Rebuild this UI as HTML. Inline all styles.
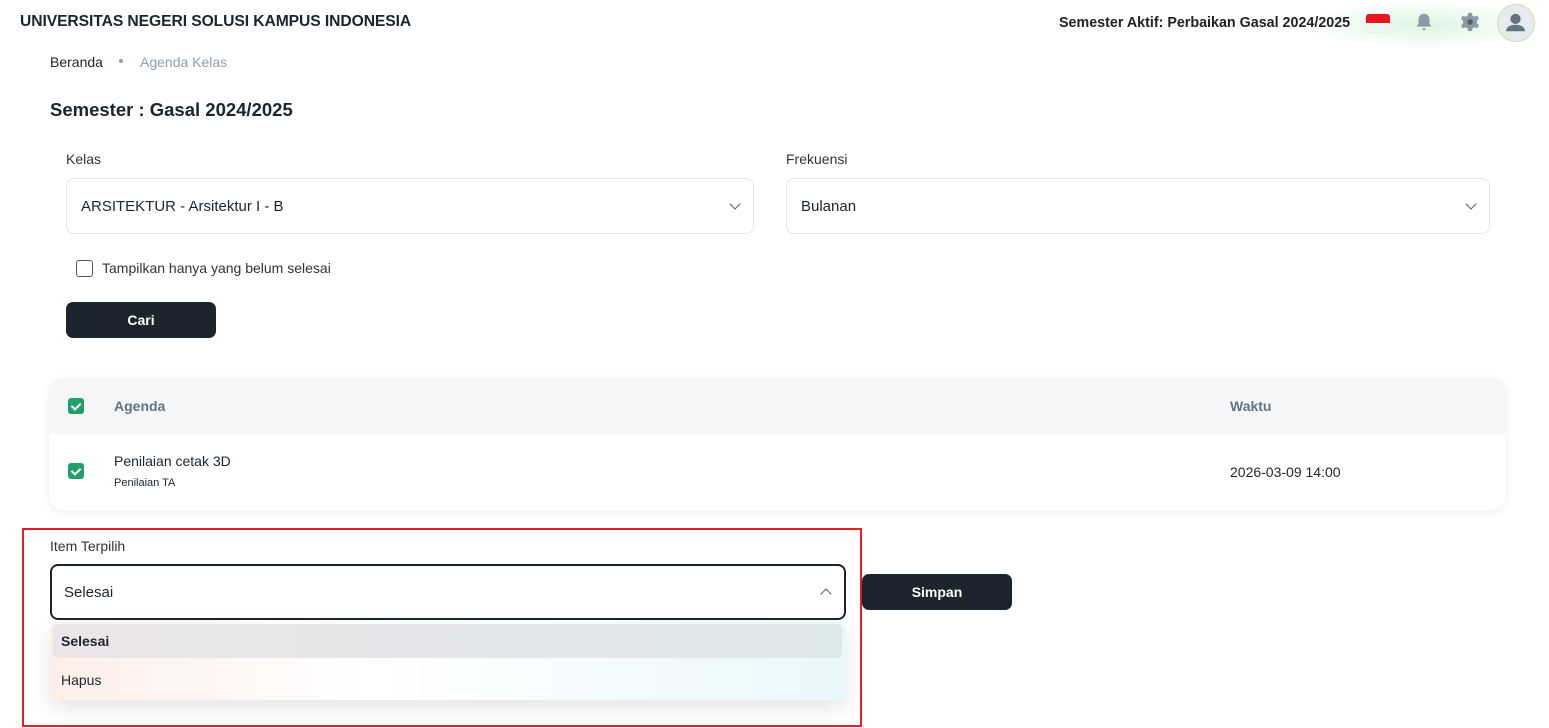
<!DOCTYPE html>
<html><head><meta charset="utf-8"><style>
*{box-sizing:border-box;margin:0;padding:0}
body{width:1549px;height:728px;overflow:hidden;background:#fff;font-family:"Liberation Sans",sans-serif;color:#1c252e;position:relative}
.abs{position:absolute}
.sel{position:absolute;border:1px solid #e3e6ea;border-radius:8px;height:56px;font-size:15px;padding:0 14px;display:flex;align-items:center;justify-content:space-between}
.chev{width:8px;height:8px;border-right:1.5px solid #555;border-bottom:1.5px solid #555;transform:rotate(45deg);margin-top:-4px}
.btn{position:absolute;background:#1c252e;color:#fff;font-weight:bold;font-size:14px;border-radius:7px;display:flex;align-items:center;justify-content:center}
.cb{position:absolute;width:16px;height:16px;border-radius:3px;background:#22a06b}
.cb:after{content:"";position:absolute;left:5px;top:3px;width:4px;height:7px;border-right:2px solid #fff;border-bottom:2px solid #fff;transform:rotate(45deg)}
</style></head><body>
<div class="abs" style="left:20px;top:13px;font-size:16px;font-weight:bold;letter-spacing:-0.1px;transform:scaleX(0.98);transform-origin:left">UNIVERSITAS NEGERI SOLUSI KAMPUS INDONESIA</div>
<div class="abs" style="left:1300px;top:0px;width:250px;height:50px;background:radial-gradient(ellipse at center,#dcf5e2 0%,rgba(255,255,255,0) 70%)"></div>
<div class="abs" style="left:1059px;top:15px;font-size:14.3px;font-weight:bold;color:#222">Semester Aktif: Perbaikan Gasal 2024/2025</div>
<div class="abs" style="left:1365px;top:13px;width:26px;height:20px;border-radius:4px;overflow:hidden;border:1px solid #eee"><div style="height:50%;background:#e8141f"></div></div>
<svg class="abs" style="left:1413px;top:11px" width="22" height="22" viewBox="0 0 24 24"><path fill="#8d9aa5" d="M12 3a6 6 0 0 0-6 6v5l-2 3h16l-2-3V9a6 6 0 0 0-6-6zM10 19a2 2 0 0 0 4 0z"/></svg>
<svg class="abs" style="left:1459px;top:11px" width="22" height="22" viewBox="0 0 24 24"><path fill="#8d9aa5" d="M10 2h4l.6 3 2.4 1.3 2.8-1.2 2 3.4-2.3 2 0 2.9 2.3 2-2 3.4-2.8-1.2L14.6 19 14 22h-4l-.6-3-2.4-1.3-2.8 1.2-2-3.4 2.3-2V10.6L2.2 8.5l2-3.4L7 6.3 9.4 5z"/><circle cx="12" cy="12" r="3" fill="#555f68"/></svg>
<div class="abs" style="left:1497px;top:4px;width:38px;height:38px;border-radius:50%;background:#e8eaee;border:1.5px solid #c9e2a8"><svg width="35" height="35" viewBox="0 0 24 24" style="margin:0"><circle cx="12" cy="9.5" r="3.5" fill="#637381"/><path fill="#637381" d="M5.5 18c0-3 3-4.5 6.5-4.5s6.5 1.5 6.5 4.5z"/></svg></div>
<div class="abs" style="left:50px;top:54px;font-size:14px;color:#1c252e">Beranda</div>
<div class="abs" style="left:119px;top:59px;width:4px;height:4px;border-radius:50%;background:#919eab"></div>
<div class="abs" style="left:140px;top:54px;font-size:14px;color:#919eab">Agenda Kelas</div>
<div class="abs" style="left:50px;top:99px;font-size:18.5px;font-weight:bold">Semester : Gasal 2024/2025</div>
<div class="abs" style="left:66px;top:151px;font-size:14px;color:#333">Kelas</div>
<div class="sel" style="left:66px;top:178px;width:688px">ARSITEKTUR - Arsitektur I - B<span class="chev"></span></div>
<div class="abs" style="left:786px;top:151px;font-size:14px;color:#333">Frekuensi</div>
<div class="sel" style="left:786px;top:178px;width:704px">Bulanan<span class="chev"></span></div>
<div class="abs" style="left:76px;top:260px;width:17px;height:17px;border:1.5px solid #555;border-radius:3px"></div>
<div class="abs" style="left:102px;top:260px;font-size:14px;color:#333">Tampilkan hanya yang belum selesai</div>
<div class="btn" style="left:66px;top:302px;width:150px;height:36px">Cari</div>
<div class="abs" style="left:49px;top:378px;width:1457px;height:132px;border-radius:14px;box-shadow:0 2px 8px rgba(0,0,0,0.08);overflow:hidden">
<div style="height:56px;background:#f4f6f8"></div></div>
<div class="cb" style="left:68px;top:398px"></div>
<div class="abs" style="left:114px;top:398px;font-size:14px;font-weight:bold;color:#637381">Agenda</div>
<div class="abs" style="left:1230px;top:398px;font-size:14px;font-weight:bold;color:#637381">Waktu</div>
<div class="cb" style="left:68px;top:463px"></div>
<div class="abs" style="left:114px;top:453px;font-size:14px">Penilaian cetak 3D</div>
<div class="abs" style="left:114px;top:477px;font-size:11px">Penilaian TA</div>
<div class="abs" style="left:1230px;top:464px;font-size:14px">2026-03-09 14:00</div>
<div class="abs" style="left:22px;top:528px;width:840px;height:199px;border:2px solid #e52020"></div>
<div class="abs" style="left:50px;top:538px;font-size:14px;color:#333">Item Terpilih</div>
<div class="sel" style="left:50px;top:564px;width:796px;border:2px solid #1c252e;padding-left:12px">Selesai<span class="chev" style="transform:rotate(-135deg);margin-top:4px"></span></div>
<div class="btn" style="left:862px;top:574px;width:150px;height:36px">Simpan</div>
<div class="abs" style="left:50px;top:622px;width:796px;height:78px;border-radius:8px;background:linear-gradient(90deg,#fdeee9 0%,#fff 40%,#e9f8fb 100%);box-shadow:0 8px 20px rgba(0,0,0,0.1)"></div>
<div class="abs" style="left:53px;top:624px;width:789px;height:34px;border-radius:6px;background:linear-gradient(90deg,#ebe5e7,#dde8eb)"></div>
<div class="abs" style="left:61px;top:633px;font-size:14px;font-weight:bold">Selesai</div>
<div class="abs" style="left:61px;top:672px;font-size:14px">Hapus</div>
</body></html>
